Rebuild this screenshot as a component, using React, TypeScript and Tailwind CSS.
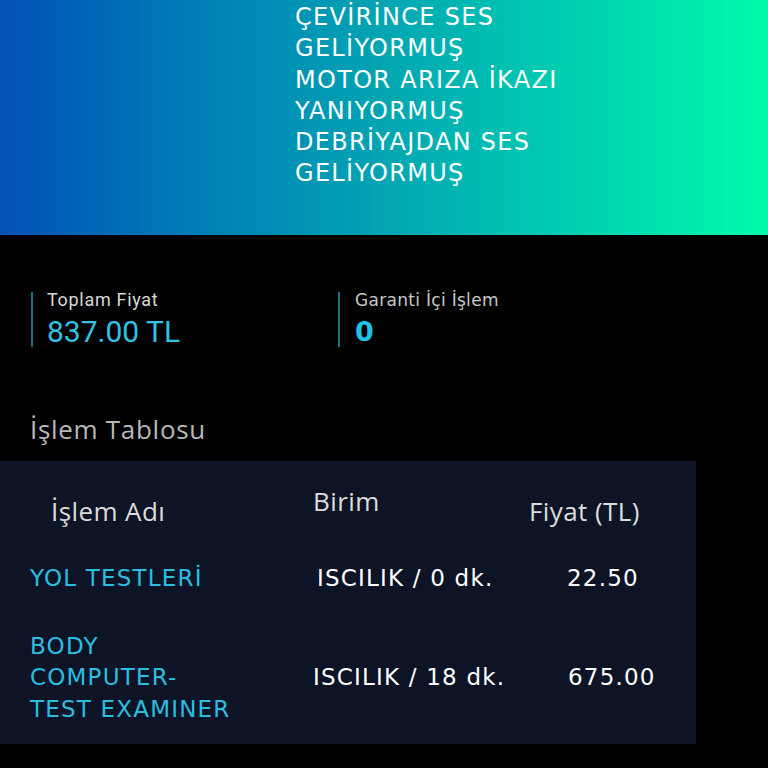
import React from 'react'

const MONT = "font-['DejaVu_Sans',sans-serif]"

const headerLines = [
    'ÇEVİRİNCE SES',
    'GELİYORMUŞ',
    'MOTOR ARIZA İKAZI',
    'YANIYORMUŞ',
    'DEBRİYAJDAN SES',
    'GELİYORMUŞ',
]

const rows = [
    { name: ['YOL TESTLERİ'], unit: 'ISCILIK / 0 dk.', price: '22.50' },
    { name: ['BODY', 'COMPUTER-', 'TEST EXAMINER'], unit: 'ISCILIK / 18 dk.', price: '675.00' },
]

const App: React.FC = () => {
    return (
        <div className="w-[768px] h-[768px] overflow-hidden bg-black">
            {/* complaint header */}
            <div className="h-[235px] bg-gradient-to-r from-[#0650b6] via-[#05a5b2] to-[#00fbaa] pl-[295px] pt-[2px]">
                <div className={`${MONT} text-white text-[24px] leading-[31.3px] tracking-[1.3px]`}>
                    {headerLines.map((l, i) => (
                        <div key={i}>{l}</div>
                    ))}
                </div>
            </div>

            {/* summary */}
            <div className="flex pt-[57px] h-[168px]">
                <div className="w-[338px] pl-[31px]">
                    <div className="border-l-2 border-[#1d7384] pl-[14px] h-[55px] flex flex-col justify-between">
                        <p className="font-['Roboto',sans-serif] text-[18px] leading-[14px] pt-[1px] tracking-[0.7px] text-[#d8d8d8]">Toplam Fiyat</p>
                        <p className="font-['Roboto',sans-serif] text-[30px] leading-[30px] text-[#2ec3e4]">837.00 TL</p>
                    </div>
                </div>
                <div>
                    <div className="border-l-2 border-[#1d7384] pl-[15px] h-[55px] flex flex-col justify-between">
                        <p className={`${MONT} text-[17px] leading-[14px] pt-[1px] tracking-[0.3px] text-[#c8c8c8]`}>Garanti İçi İşlem</p>
                        <p className={`${MONT} text-[27px] leading-[30px] font-bold text-[#21c1e8]`}>0</p>
                    </div>
                </div>
            </div>

            <p className="font-['Open_Sans',sans-serif] text-[26px] leading-[52px] pb-[6px] tracking-[0.7px] text-[#b8b8b8] pl-[30px]">İşlem Tablosu</p>

            {/* table */}
            <div className="w-[696px] h-[283px] bg-[#0d1425]">
                <div className="flex font-['Open_Sans',sans-serif] text-[26px] leading-[36px] tracking-[0.4px] text-[#dcdcdc] pt-[22px] h-[84px]">
                    <div className="w-[313px] pl-[51px] pt-[10px]">İşlem Adı</div>
                    <div className="w-[216px]">Birim</div>
                    <div className="pt-[10px]">Fiyat (TL)</div>
                </div>
                {rows.map((r, i) => (
                    <div key={i} className={`flex items-center ${MONT} text-[23px] leading-[31.5px] tracking-[1.2px] ${i === 0 ? 'h-[57px] mt-[5px]' : 'h-[110px] mt-[16px]'}`}>
                        <div className="w-[283px] pl-[30px] text-[#2bbde0]">
                            {r.name.map((n, j) => (
                                <div key={j}>{n}</div>
                            ))}
                        </div>
                        <div className={`${i === 0 ? 'w-[284px] pl-[34px]' : 'w-[285px] pl-[30px]'} text-white`}>{r.unit}</div>
                        <div className="text-white">{r.price}</div>
                    </div>
                ))}
            </div>
        </div>
    )
}

export default App
